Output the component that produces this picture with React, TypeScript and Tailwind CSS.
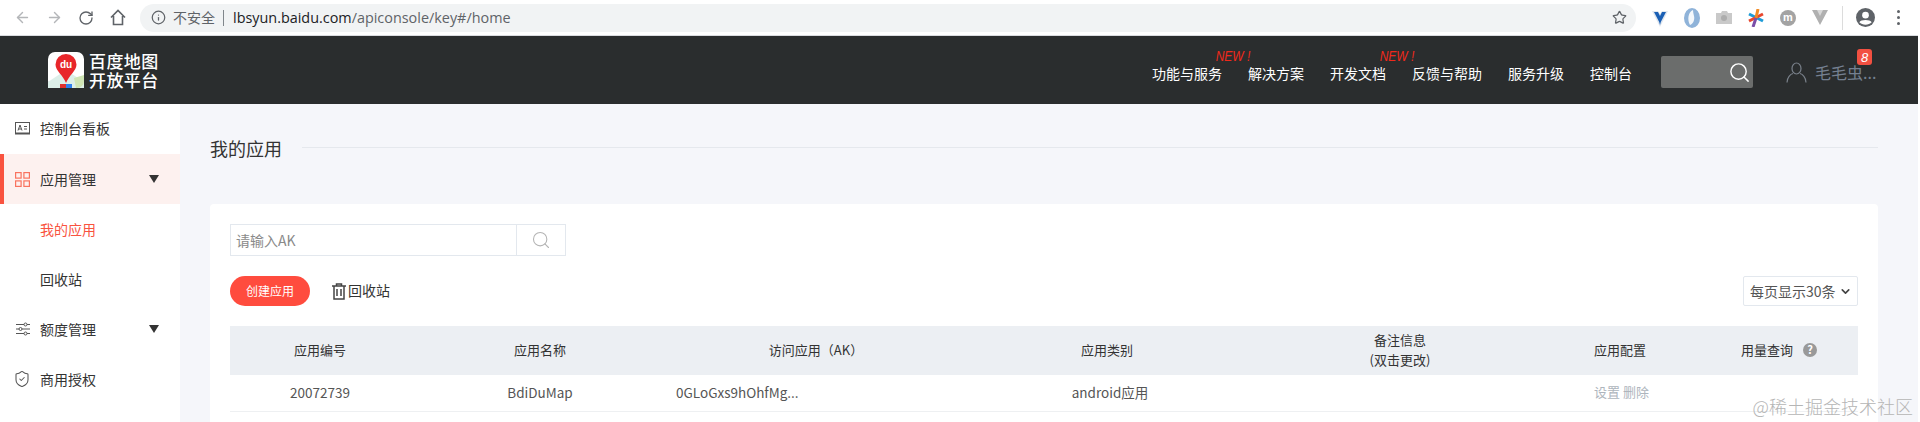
import { ArrowLeft, ArrowRight, RotateCw, Info, Star, Search, ChevronDown, ShieldCheck } from "lucide-react";

const font = { cjk: "font-['Noto_Sans_CJK_SC',sans-serif]" };

const navItems = [
  { label: "功能与服务", isNew: true },
  { label: "解决方案", isNew: false },
  { label: "开发文档", isNew: true },
  { label: "反馈与帮助", isNew: false },
  { label: "服务升级", isNew: false },
  { label: "控制台", isNew: false },
];

function HomeIcon() {
  return (
    <svg width="16" height="17" viewBox="0 0 16 17" fill="none" stroke="#5f6368" strokeWidth="1.6">
      <path d="M1 8.5 8 1.5l7 7M3.5 7v8.5h9V7" />
    </svg>
  );
}

function Extensions() {
  return (
    <div className="flex items-center">
      {/* vee */}
      <svg width="16" height="18" viewBox="0 0 16 18">
        <path d="M0 2h6l2 3 2-3h6L8 18z" fill="#dfe6ee" />
        <path d="M2 3h4l2 4 2-4h4L8.800 13 8 16l-.8-3z" fill="#1a5fb4" />
      </svg>
      {/* swirl */}
      <svg width="16" height="20" viewBox="0 0 16 20" className="ml-[16px]">
        <ellipse cx="8" cy="10" rx="8" ry="10" fill="#8fb3d9" />
        <path d="M9 2C4 4 3 12 6 17c3-1 5-5 4-9-.5-2-1-4-1-6z" fill="#f4f8fc" />
      </svg>
      {/* folder */}
      <svg width="16" height="13" viewBox="0 0 16 13" className="ml-[16px]">
        <path d="M0 2h5l1-2h5l1 2h4v11H0z" fill="#c9c9c9" />
        <circle cx="8" cy="7" r="3" fill="#adadad" />
      </svg>
      {/* star */}
      <svg width="16" height="18" viewBox="0 0 16 18" className="ml-[16px]">
        <path d="M1 5 15 12" stroke="#1e9bd7" strokeWidth="3" />
        <path d="M15 5 1 12" stroke="#e8472f" strokeWidth="3" />
        <path d="M10 0 8 9" stroke="#f08a24" strokeWidth="3" />
        <path d="M8 9 5 18" stroke="#7b4fa8" strokeWidth="3" />
      </svg>
      <span className="ml-[16px] flex h-[16px] w-[16px] items-center justify-center rounded-full bg-[#a3a3a3] font-['Liberation_Sans',sans-serif] text-[11px] font-bold leading-none text-white">
        m
      </span>
      {/* v logo */}
      <svg width="16" height="15" viewBox="0 0 16 15" className="ml-[16px]">
        <path d="M0 0h16L8 15z" fill="#b0b0b0" />
        <path d="M5 0h6L8 6z" fill="#d8d8d8" />
      </svg>
      <div className="ml-[14px] h-[24px] w-px bg-[#dcdcdc]" />
      <svg width="19" height="19" viewBox="0 0 20 20" className="ml-[13px]">
        <circle cx="10" cy="10" r="10" fill="#5f6368" />
        <circle cx="10" cy="7.500" r="3.500" fill="#fff" />
        <path d="M3.500 15c1.500-3 11.500-3 13 0-3 3.500-10 3.500-13 0z" fill="#fff" />
      </svg>
      <div className="ml-[22px] flex flex-col gap-[3px]">
        <i className="block h-[3px] w-[3px] rounded-full bg-[#5f6368]" />
        <i className="block h-[3px] w-[3px] rounded-full bg-[#5f6368]" />
        <i className="block h-[3px] w-[3px] rounded-full bg-[#5f6368]" />
      </div>
    </div>
  );
}

function BrowserBar() {
  return (
    <div className="flex h-[36px] items-center border-b border-[#dadce0] bg-white pl-[14px]">
      <ArrowLeft size={17} color="#b4b6b9" strokeWidth={2} />
      <ArrowRight size={17} color="#b4b6b9" strokeWidth={2} className="ml-[15px]" />
      <RotateCw size={16} color="#5f6368" strokeWidth={2} className="ml-[15px]" />
      <span className="ml-[16px]">
        <HomeIcon />
      </span>
      <div className="ml-[14px] flex h-[28px] w-[1496px] items-center rounded-full bg-[#f1f3f4] pl-[11px] pr-[9px]">
        <Info size={15} color="#5f6368" />
        <span className={`ml-[7px] text-[14px] text-[#5f6368] ${font.cjk}`}>不安全</span>
        <span className="ml-[8px] h-[16px] w-px bg-[#80868b]" />
        <span className="ml-[9px] font-['Open_Sans',sans-serif] text-[14.4px] text-[#5f6368]">
          <span className="text-[#202124]">lbsyun.baidu.com</span>/apiconsole/key#/home
        </span>
        <Star size={15} color="#5f6368" strokeWidth={2} className="ml-auto" />
      </div>
      <div className="ml-[16px]">
        <Extensions />
      </div>
    </div>
  );
}

function Logo() {
  return (
    <div className="flex items-center">
      <svg width="36" height="36" viewBox="0 0 36 36">
        <rect width="36" height="36" rx="7" fill="#fff" />
        <path d="M0 30 12 22h12l12 8v-1a7 7 0 0 1 0 0V36H0z" fill="#dcefe9" />
        <path d="M26 26l10-3v6a7 7 0 0 1-7 7h-1z" fill="#cfe5b5" />
        <rect x="12" y="32" width="6" height="4" fill="#e0302c" />
        <rect x="18" y="32" width="6" height="4" fill="#2f80ed" />
        <path d="M18 2a10.500 10.500 0 0 0-10.500 10.500C7.500 19 15 23 18 31c3-8 10.500-12 10.500-18.500A10.500 10.500 0 0 0 18 2z" fill="#e8262a" />
        <text x="18" y="16" textAnchor="middle" fontSize="10" fontWeight="700" fill="#fff" fontFamily="Liberation Sans, sans-serif">
          du
        </text>
      </svg>
      <div className={`ml-[5px] text-[17px] font-medium leading-[19px] tracking-[0.4px] text-white ${font.cjk}`}>
        <div>百度地图</div>
        <div>开放平台</div>
      </div>
    </div>
  );
}

function Header() {
  return (
    <div className="flex h-[68px] items-center bg-[#2a2d2e] pl-[48px]">
      <Logo />
      <nav className="ml-auto mt-[6px] flex gap-[26px]">
        {navItems.map((item) => (
          <div key={item.label} className={`relative text-[14px] text-white ${font.cjk}`}>
            {item.isNew && (
              <span className="absolute right-[-28px] top-[-15px] origin-right scale-x-[0.8] whitespace-nowrap font-['Liberation_Sans',sans-serif] text-[15px] italic leading-none text-[#f0291b]">
                NEW !
              </span>
            )}
            {item.label}
          </div>
        ))}
      </nav>
      <div className="ml-[29px] mt-[4px] flex h-[32px] w-[92px] items-center justify-end rounded-[2px] bg-[#6b6d6c] pr-[2px]">
        <Search size={23} color="#fff" strokeWidth={1.5} />
      </div>
      <div className="relative ml-[33px] mr-[43px] mt-[4px] flex items-center">
        <svg width="21" height="21" viewBox="0 0 21 21" fill="none" stroke="#79808a" strokeWidth="1.200">
          <ellipse cx="10.500" cy="6.500" rx="4.500" ry="5.500" />
          <path d="M1 20.500c0-5 3.500-8.500 6-9M20 20.500c0-5-3.500-8.500-6-9" />
        </svg>
        <span className={`ml-[8px] w-[60px] whitespace-nowrap text-[16px] text-[#758091] ${font.cjk}`}>毛毛虫...</span>
        <span className="absolute right-[3px] top-[-11px] flex h-[16px] w-[15px] items-center justify-center rounded-[3px] bg-[#f25041] font-['Liberation_Sans',sans-serif] text-[13px] italic leading-none text-white">
          8
        </span>
      </div>
    </div>
  );
}

function Caret() {
  return <span className="block h-0 w-0 border-x-[5px] border-t-[8px] border-x-transparent border-t-[#333]" />;
}

function Sidebar() {
  const rowClass = `flex h-[50px] items-center text-[14px] text-[#333] ${font.cjk}`;
  return (
    <aside className="w-[180px] shrink-0 bg-white">
      <div className={`${rowClass} pb-[1px] pl-[15px]`}>
        <svg width="15" height="13" viewBox="0 0 15 13" fill="none" stroke="#555">
          <rect x="0.500" y="0.500" width="14" height="11" strokeWidth="1" />
          <path d="M0 11.500h15" strokeWidth="2" />
          <path d="M3 8.500 5 3l2 5.500M3.700 7h2.600M9 4.500h3M9 7h3" strokeWidth="1" />
        </svg>
        <span className="ml-[10px]">控制台看板</span>
      </div>
      <div className={`${rowClass} border-l-4 border-[#f9533f] bg-[#fdf1ef] pl-[11px] pr-[21px]`}>
        <svg width="15" height="15" viewBox="0 0 15 15" fill="none" stroke="#f9735f" strokeWidth="1.200">
          <rect x="0.600" y="0.600" width="5.500" height="5.500" />
          <rect x="8.900" y="0.600" width="5.500" height="5.500" />
          <rect x="0.600" y="8.900" width="5.500" height="5.500" />
          <rect x="8.900" y="8.900" width="5.500" height="5.500" />
        </svg>
        <span className="ml-[10px]">应用管理</span>
        <span className="ml-auto">
          <Caret />
        </span>
      </div>
      <div className={`${rowClass} pl-[40px] !text-[#f9533f]`}>我的应用</div>
      <div className={`${rowClass} pl-[40px]`}>回收站</div>
      <div className={`${rowClass} pl-[16px] pr-[21px]`}>
        <svg width="14" height="14" viewBox="0 0 14 14" fill="#fff" stroke="#555">
          <path d="M0 2.500h14M0 7h14M0 11.500h14" />
          <circle cx="9.500" cy="2.500" r="1.500" />
          <circle cx="4.500" cy="7" r="1.500" />
          <circle cx="9.500" cy="11.500" r="1.500" />
        </svg>
        <span className="ml-[10px]">额度管理</span>
        <span className="ml-auto">
          <Caret />
        </span>
      </div>
      <div className={`${rowClass} pl-[13px]`}>
        <ShieldCheck size={18} color="#555" strokeWidth={1.4} />
        <span className="ml-[9px]">商用授权</span>
      </div>
    </aside>
  );
}

function TableHeader() {
  return (
    <div className={`grid h-[49px] grid-cols-[180px_260px_284px_306px_280px_160px_158px] items-center bg-[#eceff3] pb-[2px] text-center text-[13px] text-[#333] ${font.cjk}`}>
      <div>应用编号</div>
      <div>应用名称</div>
      <div className="pl-[8px]">访问应用（AK）</div>
      <div>应用类别</div>
      <div className="leading-[20px]">
        备注信息
        <br />
        (双击更改)
      </div>
      <div>应用配置</div>
      <div className="flex items-center pl-[41px]">
        用量查询
        <span className="ml-[10px] flex h-[14px] w-[14px] items-center justify-center rounded-full bg-[#999] text-[11px] font-bold leading-none text-white">
          ?
        </span>
      </div>
    </div>
  );
}

function TableRow() {
  return (
    <div className={`grid h-[37px] grid-cols-[180px_260px_284px_306px_280px_160px_158px] items-center border-b border-[#eef0f2] pb-[1px] text-center text-[13.5px] text-[#555] ${font.cjk}`}>
      <div>20072739</div>
      <div>BdiDuMap</div>
      <div className="pl-[6px] text-left">0GLoGxs9hOhfMg...</div>
      <div className="pl-[6px]">android应用</div>
      <div />
      <div className="pb-[2px] pl-[3px] text-[13px] text-[#9aa3ad] opacity-80">设置 删除</div>
      <div />
    </div>
  );
}

export default function App() {
  return (
    <div className="relative h-[422px] w-full overflow-hidden bg-white pr-[2px]">
      <BrowserBar />
      <Header />
      <div className="flex bg-[#f5f6fa]">
        <Sidebar />
        <main className="min-w-0 flex-1 pl-[30px] pr-[40px]">
          <div className="flex h-[100px] items-start pt-[31px]">
            <h1 className={`text-[18px] leading-[27px] text-[#333] ${font.cjk}`}>我的应用</h1>
            <div className="ml-[20px] mt-[12px] h-px flex-1 bg-[#e5e8ed]" />
          </div>
          <div className="rounded-[4px] bg-white p-[20px]">
            <div className="flex h-[32px] w-[336px] border border-[#e3e8ee]">
              <span className={`flex flex-1 items-center pl-[5px] text-[14px] text-[#8a8a8a] ${font.cjk}`}>请输入AK</span>
              <span className="flex w-[49px] items-center justify-center border-l border-[#e3e8ee]">
                <Search size={20} color="#b4b4b4" strokeWidth={1.3} />
              </span>
            </div>
            <div className="mt-[20px] flex h-[30px] items-center">
              <button className={`h-[30px] w-[80px] rounded-full bg-[#ff4c3e] text-[12px] text-white ${font.cjk}`}>创建应用</button>
              <svg width="14" height="17" viewBox="0 0 14 17" fill="none" stroke="#444" strokeWidth="1.500" className="ml-[22px]">
                <path d="M0 3h14M4.500 3V1h5v2M2 3v13h10V3M5 6v7M9 6v7" />
              </svg>
              <span className={`ml-[2px] pb-[1px] text-[14px] text-[#333] ${font.cjk}`}>回收站</span>
              <div className={`ml-auto flex h-[30px] w-[115px] items-center justify-between rounded-[2px] border border-[#e3e8ee] pl-[6px] pr-[5px] text-[14px] text-[#555] ${font.cjk}`}>
                <span className="whitespace-nowrap">每页显示30条</span>
                <ChevronDown size={13} color="#444" strokeWidth={3} />
              </div>
            </div>
            <div className="mt-[20px]">
              <TableHeader />
              <TableRow />
            </div>
          </div>
        </main>
      </div>
      <span className={`absolute bottom-[7px] right-[7px] text-[18px] font-light leading-none text-[#b5b5b5] ${font.cjk}`}>@稀土掘金技术社区</span>
    </div>
  );
}
